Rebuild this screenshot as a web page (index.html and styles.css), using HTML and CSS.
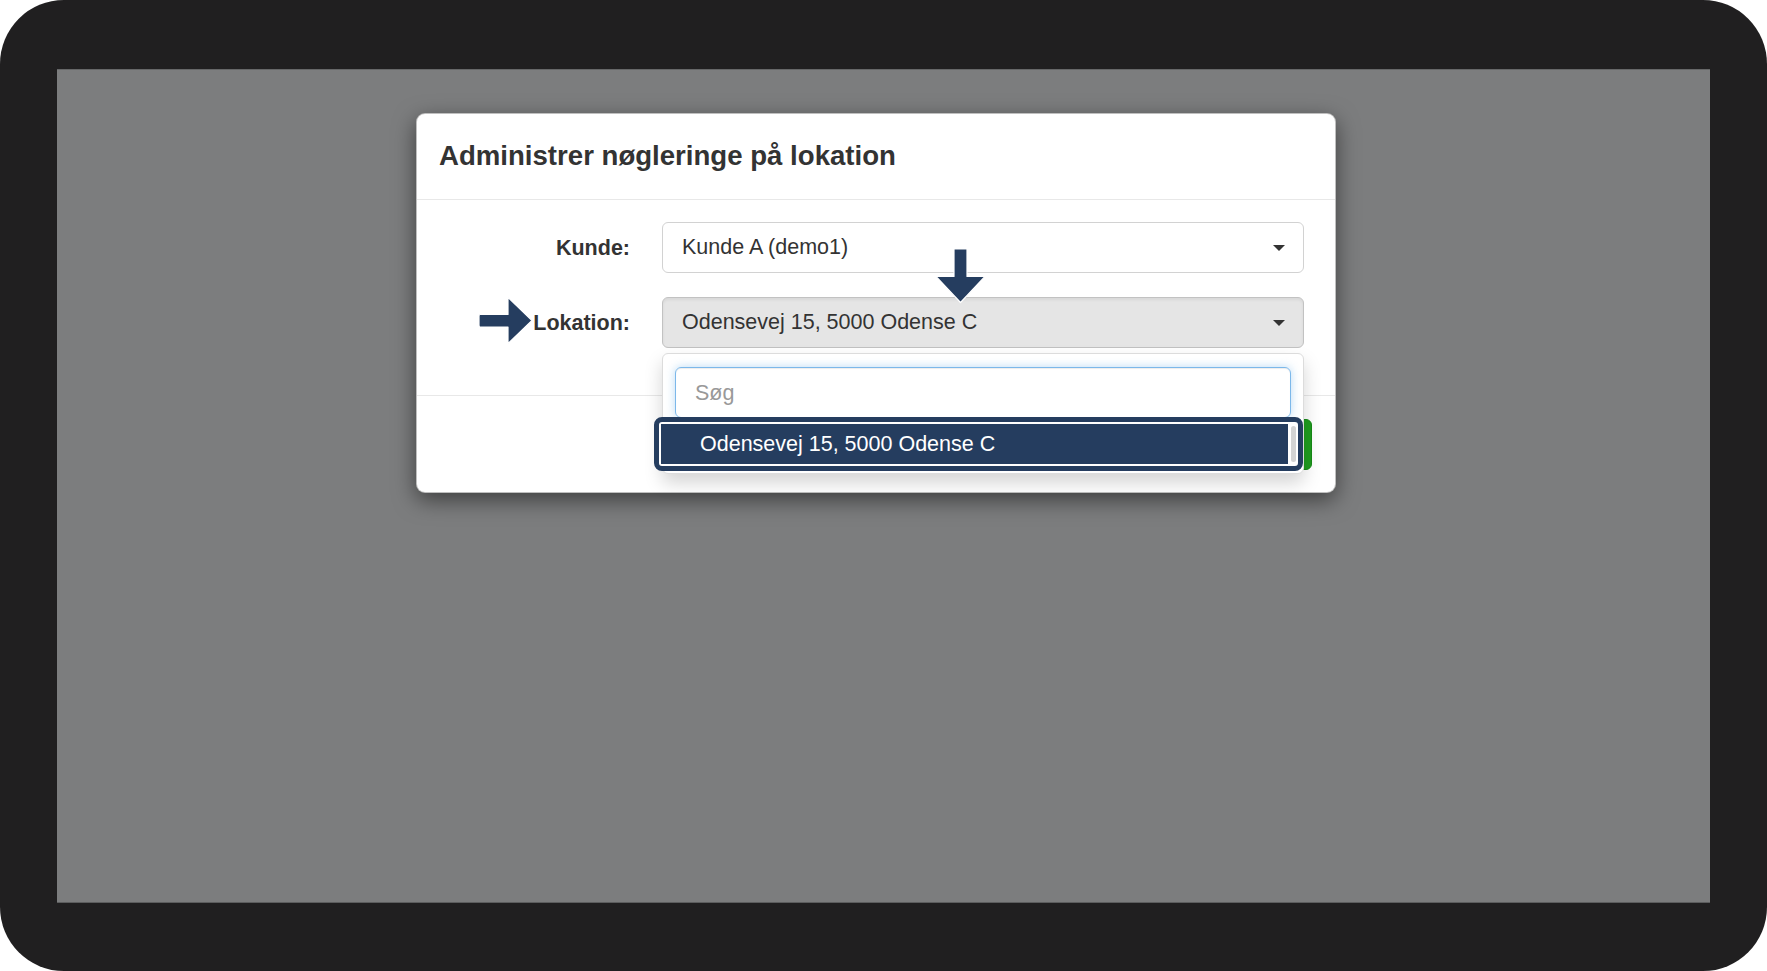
FILE: index.html
```html
<!DOCTYPE html>
<html lang="da">
<head>
<meta charset="utf-8">
<title>Administrer nøgleringe på lokation</title>
<link rel="stylesheet" href="styles.css">
</head>
<body>
<div class="frame">
  <div class="screen">
    <div class="modal">
      <div class="modal-header">
        <h4 class="modal-title">Administrer nøgleringe på lokation</h4>
      </div>
      <div class="modal-body">
        <div class="form-group">
          <label class="control-label">Kunde:</label>
          <div class="control">
            <div class="select">
              <span class="select-value">Kunde A (demo1)</span>
              <span class="caret"></span>
            </div>
          </div>
        </div>
        <div class="form-group">
          <label class="control-label">Lokation:</label>
          <div class="control">
            <div class="select select-open">
              <span class="select-value">Odensevej 15, 5000 Odense C</span>
              <span class="caret"></span>
            </div>
            <div class="dropdown">
              <div class="search">Søg</div>
              <div class="results">
                <div class="option">Odensevej 15, 5000 Odense C</div>
                <div class="scrollbar"></div>
              </div>
            </div>
          </div>
        </div>
      </div>
      <div class="modal-footer">
        <button class="btn-success" type="button">Gem</button>
      </div>

      <svg class="arrow arrow-right" width="56" height="49" viewBox="0 0 56 49">
        <path d="M2,18.5 H30 V1.5 L54,24.5 L30,47.5 V31 H2 Q1,31 1,29 V20.5 Q1,18.5 2,18.5 Z" fill="#253d5f" stroke="#ffffff" stroke-width="1.2" stroke-linejoin="round"/>
      </svg>
      <svg class="arrow arrow-down" width="51" height="56" viewBox="0 0 51 56">
        <path d="M19,1 H32 V28.5 H50 L25.5,54.5 L1,28.5 H19 Z" fill="#253d5f" stroke="#ffffff" stroke-width="1.2" stroke-linejoin="round"/>
      </svg>
    </div>
  </div>
</div>
</body>
</html>
```

FILE: styles.css
```css
* {
  box-sizing: border-box;
}

html, body {
  margin: 0;
  padding: 0;
  background: #ffffff;
}

body {
  font-family: "Liberation Sans", Arial, Helvetica, sans-serif;
  color: #333333;
}

.frame {
  width: 1767px;
  height: 971px;
  background: #201f20;
  border-radius: 64px;
  padding: 69px 57px 68px 57px;
}

.screen {
  width: 100%;
  height: 100%;
  background: #7c7d7e;
  box-shadow: inset 0 1px 0 #666768, inset 0 -1px 0 #5c5d5e;
  padding-top: 44px;
  padding-left: 359px;
}

.modal {
  position: relative;
  width: 920px;
  background: #ffffff;
  border: 1px solid rgba(0, 0, 0, 0.25);
  border-radius: 9px;
  box-shadow: 0 7px 22px rgba(0, 0, 0, 0.5);
}

.modal-header {
  padding: 23px 23px 23px 22px;
  border-bottom: 1px solid #e8e8e8;
}

.modal-title {
  margin: 0;
  font-size: 27.6px;
  font-weight: bold;
  line-height: 38.6px;
  color: #333333;
}

.modal-body {
  padding: 22px 23px 23px 23px;
}

.form-group {
  display: grid;
  grid-template-columns: 190px 642px;
  column-gap: 32px;
  margin-bottom: 23px;
}

.control-label {
  font-size: 21.5px;
  font-weight: bold;
  line-height: 51px;
  padding-top: 1px;
  text-align: right;
  color: #333333;
}

.control {
  position: relative;
}

.select {
  height: 51px;
  display: flex;
  align-items: center;
  justify-content: space-between;
  padding: 1px 18px 0 19px;
  border: 1px solid #d2d2d2;
  border-radius: 6px;
  background: #ffffff;
  font-size: 21.5px;
  color: #333333;
}

.select-open {
  background: #e5e5e5;
  border-color: #c2c2c2;
  box-shadow: inset 0 2px 3px rgba(0, 0, 0, 0.06);
}

.caret {
  width: 0;
  height: 0;
  border-left: 6px solid transparent;
  border-right: 6px solid transparent;
  border-top: 6px solid #333333;
}

.dropdown {
  position: absolute;
  z-index: 2;
  top: 56px;
  left: 0;
  width: 642px;
  background: #ffffff;
  border: 1px solid #dcdcdc;
  border-radius: 6px;
  box-shadow: 0 9px 18px rgba(0, 0, 0, 0.17);
  padding: 13px 12px 2px 12px;
}

.search {
  height: 51px;
  border: 1px solid #7cb8ea;
  border-radius: 6px;
  box-shadow: inset 0 1px 1px rgba(0, 0, 0, 0.075), 0 0 10px rgba(102, 175, 233, 0.45);
  padding-left: 19px;
  font-size: 21.5px;
  line-height: 50px;
  color: #999999;
}

.results {
  position: relative;
  display: flex;
  margin: -1px -12px 0 -21px;
  height: 54px;
  border: 5px solid #253d5f;
  border-radius: 8px;
  background: #ffffff;
  padding: 2px;
}

.option {
  flex: 1;
  background: #253d5f;
  color: #ffffff;
  font-size: 21.5px;
  line-height: 41px;
  padding-left: 39px;
}

.scrollbar {
  width: 5px;
  margin: 2px 0 2px 3px;
  background: #d3d3d3;
  border-radius: 3px;
}

.modal-footer {
  border-top: 1px solid #e8e8e8;
  padding: 23px 23px 22px 23px;
  display: flex;
  justify-content: flex-end;
}

.btn-success {
  height: 51px;
  padding: 0 30px;
  border: 1px solid #168a16;
  border-radius: 6px;
  background: #1f9c1f;
  color: #ffffff;
  font-family: "Liberation Sans", Arial, sans-serif;
  font-size: 21.5px;
}

.arrow {
  position: absolute;
  z-index: 3;
}

.arrow-right {
  left: 61px;
  top: 182px;
}

.arrow-down {
  left: 518px;
  top: 134px;
}
```
